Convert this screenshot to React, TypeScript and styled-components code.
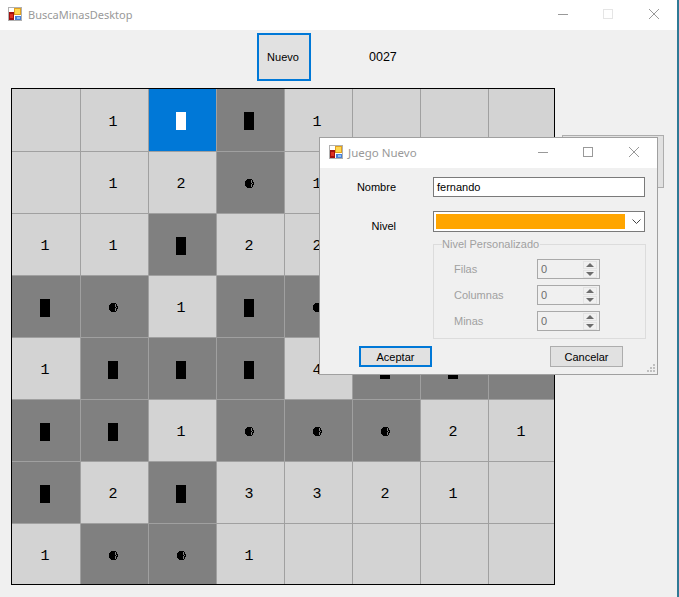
import styled, { createGlobalStyle } from "styled-components";

const BOARD = [
  ".1Ff1...",
  ".12b1...",
  "11f22...",
  "fb1fb...",
  "1fff4ffx",
  "ff1bbb21",
  "f2f3321.",
  "1bb1....",
];

const GlobalStyle = createGlobalStyle`
  html, body {
    margin: 0;
    padding: 0;
    background: #f0f0f0;
  }
  * {
    box-sizing: border-box;
  }
`;

const Desktop = styled.div`
  position: relative;
  display: flex;
  width: 679px;
  height: 597px;
  overflow: hidden;
  font-family: "Liberation Sans", Arial, sans-serif;
  font-size: 11px;
  color: #000;
`;

const MainWindow = styled.div`
  flex: 1;
  display: flex;
  flex-direction: column;
  background: #f0f0f0;
`;

const DesktopEdge = styled.div`
  width: 2px;
  background: #2f7a96;
`;

const TitleBar = styled.div`
  display: flex;
  align-items: center;
  flex-shrink: 0;
  height: 30px;
  background: #fff;
`;

const MainTitleBar = styled(TitleBar)`
  padding-left: 8px;
`;

const DialogTitleBar = styled(TitleBar)`
  padding-left: 9px;
`;

const AppIconFrame = styled.svg`
  display: block;
  flex-shrink: 0;
  margin-bottom: 2px;
`;

const TitleText = styled.span`
  margin-left: 6px;
  margin-bottom: 2px;
  font-family: "Noto Sans", sans-serif;
  font-size: 11px;
  color: #999;
  white-space: nowrap;
`;

const DialogTitleText = styled(TitleText)`
  margin-left: 5px;
  font-size: 11.5px;
`;

const WindowControls = styled.div`
  display: flex;
  align-items: center;
  gap: 35px;
  margin-left: auto;
  margin-bottom: 2px;
  padding-right: 18px;
`;

const ControlIcon = styled.svg`
  display: block;
  width: 10px;
  height: 10px;
`;

const CloseGlyph = styled(ControlIcon)`
  margin-left: 1px;
`;

const Toolbar = styled.div`
  display: flex;
  align-items: flex-start;
  height: 58px;
  padding: 3px 0 0 257px;
`;

const ActionButton = styled.button<{ $focused?: boolean }>`
  padding: 0;
  font-family: inherit;
  font-size: 11px;
  color: #000;
  background: #e1e1e1;
  border: ${(p) => (p.$focused ? "2px solid #0078d7" : "1px solid #adadad")};
  border-radius: 0;
`;

const NewGameButton = styled(ActionButton)`
  width: 54px;
  height: 48px;
  padding-right: 2px;
`;

const Counter = styled.span`
  margin-left: 58px;
  font-size: 12.5px;
  line-height: 48px;
`;

const Board = styled.div`
  display: grid;
  grid-template-columns: 68px repeat(6, 67px) 65px;
  grid-template-rows: 62px repeat(6, 61px) 60px;
  gap: 1px;
  width: 544px;
  height: 497px;
  margin-left: 11px;
  background: #a0a0a0;
  border: 1px solid #000;
`;

const CELL_COLORS = { open: "#d3d3d3", closed: "#808080", selected: "#0078d7" };

const Cell = styled.div<{ $tone: keyof typeof CELL_COLORS }>`
  display: flex;
  align-items: center;
  justify-content: center;
  padding: 2px 3px 0 0;
  font-family: "Liberation Mono", monospace;
  font-size: 15px;
  background: ${(p) => CELL_COLORS[p.$tone]};

  &:nth-child(8n + 1) {
    padding-right: 2px;
  }

  &:nth-child(8n) {
    padding-right: 1px;
  }
`;

const CellNumber = styled.span`
  padding-top: 2px;
`;

const FlagMark = styled.span<{ $light?: boolean }>`
  width: 10px;
  height: 18px;
  background: ${(p) => (p.$light ? "#fff" : "#000")};
`;

const BackgroundButton = styled.div`
  position: absolute;
  top: 135px;
  left: 562px;
  width: 102px;
  height: 53px;
  background: #e1e1e1;
  border: 1px solid #adadad;
`;

const Dialog = styled.div`
  position: absolute;
  top: 137px;
  left: 319px;
  display: flex;
  flex-direction: column;
  width: 339px;
  height: 238px;
  background: #f0f0f0;
  border: 1px solid #a0a0a0;
`;

const DialogBody = styled.div`
  display: flex;
  flex-direction: column;
  padding-top: 9px;
`;

const FormRow = styled.div<{ $gap?: number }>`
  display: flex;
  align-items: flex-start;
  height: ${(p) => (p.$gap ? 20 + p.$gap : 21)}px;
`;

const FormLabel = styled.label<{ $drop: number }>`
  width: 76px;
  margin-top: ${(p) => p.$drop}px;
  margin-right: 37px;
  text-align: right;
  white-space: nowrap;
`;

const NameInput = styled.div`
  display: flex;
  align-items: center;
  width: 212px;
  height: 20px;
  padding-left: 3px;
  background: #fff;
  border: 1px solid #7a7a7a;
`;

const LevelSelect = styled.div`
  display: flex;
  align-items: center;
  width: 212px;
  height: 21px;
  padding: 2px;
  background: #fff;
  border: 1px solid #7a7a7a;
`;

const LevelColor = styled.div`
  width: 189px;
  height: 15px;
  background: #ffa500;
`;

const ChevronIcon = styled.svg`
  display: block;
  width: 9px;
  height: 5px;
  margin-left: 7px;
`;

const CustomGroup = styled.fieldset`
  width: 213px;
  margin: 5px 0 0 113px;
  padding: 8px 0 7px 20px;
  border: 1px solid #dcdcdc;
`;

const GroupLegend = styled.legend`
  margin-left: -12px;
  padding: 0 1px 0 0;
  line-height: 14px;
  font-size: 11px;
  color: #a0a0a0;
`;

const SpinRow = styled.div`
  display: flex;
  align-items: center;
  height: 20px;
  margin-bottom: 6px;

  &:last-child {
    margin-bottom: 0;
  }
`;

const SpinLabel = styled.span`
  width: 83px;
  color: #a0a0a0;
`;

const SpinField = styled.div`
  display: flex;
  align-items: center;
  justify-content: space-between;
  width: 63px;
  height: 20px;
  padding: 1px 2px 1px 3px;
  color: #6d6d6d;
  border: 1px solid #a9a9a9;
`;

const SpinButtons = styled.div`
  display: flex;
  flex-direction: column;
  gap: 1px;
  width: 14px;
`;

const SpinButton = styled.div`
  display: flex;
  align-items: center;
  justify-content: center;
  height: 8px;
  background: #f0f0f0;
  border: 1px solid #e3e3e3;
`;

const SpinArrow = styled.span<{ $down?: boolean }>`
  width: 0;
  height: 0;
  border-left: 4px solid transparent;
  border-right: 4px solid transparent;
  ${(p) => (p.$down ? "border-top: 4px solid #6d6d6d;" : "border-bottom: 4px solid #6d6d6d;")}
`;

const DialogActions = styled.div`
  display: flex;
  justify-content: space-between;
  margin-top: 7px;
  padding: 0 34px 0 39px;
`;

const DialogButton = styled(ActionButton)`
  width: 73px;
  height: 21px;
`;

const ResizeGrip = styled.svg`
  position: absolute;
  right: 1px;
  bottom: 1px;
  width: 9px;
  height: 9px;
`;

function AppIcon() {
  return (
    <AppIconFrame width="14" height="14" viewBox="0 0 14 14" shapeRendering="crispEdges">
      <rect width="14" height="14" fill="#b0b0b0" />
      <rect x="1" y="1" width="12" height="12" fill="#fff" />
      <rect x="6" y="1" width="7" height="7" fill="#e0a020" />
      <rect x="7" y="2" width="5" height="5" fill="#ffd850" />
      <rect x="1" y="5" width="5" height="8" fill="#a01010" />
      <rect x="2" y="7" width="3" height="4" fill="#e03020" />
      <rect x="7" y="9" width="6" height="4" fill="#4a80d8" />
      <rect x="9" y="10" width="3" height="2" fill="#90c0f0" />
    </AppIconFrame>
  );
}

function MinimizeIcon({ color }: { color: string }) {
  return (
    <ControlIcon viewBox="0 0 10 10" shapeRendering="crispEdges">
      <rect x="0" y="5" width="10" height="1" fill={color} />
    </ControlIcon>
  );
}

function MaximizeIcon({ color }: { color: string }) {
  return (
    <ControlIcon viewBox="0 0 10 10" shapeRendering="crispEdges">
      <rect x="0.5" y="0.5" width="9" height="9" fill="none" stroke={color} />
    </ControlIcon>
  );
}

function CloseIcon() {
  return (
    <CloseGlyph viewBox="0 0 10 10">
      <path d="M0 0L10 10M10 0L0 10" stroke="#999" fill="none" />
    </CloseGlyph>
  );
}

function MineIcon() {
  return (
    <svg width="9" height="9" viewBox="0 0 9 9" shapeRendering="crispEdges">
      <path
        d="M2 0h5v1H2zM1 1h5v1H1zM7 1h1v1H7zM0 2h6v1H0zM7 2h1v1H7zM0 3h6v1H0zM7 3h2v1H7zM0 4h7v1H0zM8 4h1v1H8zM0 5h6v1H0zM7 5h2v1H7zM0 6h6v1H0zM7 6h1v1H7zM1 7h5v1H1zM7 7h1v1H7zM2 8h5v1H2z"
        fill="#000"
      />
    </svg>
  );
}

function BoardCell({ value }: { value: string }) {
  if (value === "F") {
    return (
      <Cell $tone="selected">
        <FlagMark $light />
      </Cell>
    );
  }
  if (value === "f") {
    return (
      <Cell $tone="closed">
        <FlagMark />
      </Cell>
    );
  }
  if (value === "b") {
    return (
      <Cell $tone="closed">
        <MineIcon />
      </Cell>
    );
  }
  if (value === "x") return <Cell $tone="closed" />;
  if (value === ".") return <Cell $tone="open" />;
  return (
    <Cell $tone="open">
      <CellNumber>{value}</CellNumber>
    </Cell>
  );
}

function Spinner({ label }: { label: string }) {
  return (
    <SpinRow>
      <SpinLabel>{label}</SpinLabel>
      <SpinField>
        0
        <SpinButtons>
          <SpinButton>
            <SpinArrow />
          </SpinButton>
          <SpinButton>
            <SpinArrow $down />
          </SpinButton>
        </SpinButtons>
      </SpinField>
    </SpinRow>
  );
}

function NewGameDialog() {
  return (
    <Dialog>
      <DialogTitleBar>
        <AppIcon />
        <DialogTitleText>Juego Nuevo</DialogTitleText>
        <WindowControls>
          <MinimizeIcon color="#999" />
          <MaximizeIcon color="#999" />
          <CloseIcon />
        </WindowControls>
      </DialogTitleBar>
      <DialogBody>
        <FormRow $gap={14}>
          <FormLabel $drop={4}>Nombre</FormLabel>
          <NameInput>fernando</NameInput>
        </FormRow>
        <FormRow>
          <FormLabel $drop={9}>Nivel</FormLabel>
          <LevelSelect>
            <LevelColor />
            <ChevronIcon viewBox="0 0 9 5">
              <path d="M0.5 0.5L4.5 4.5L8.5 0.5" fill="none" stroke="#444" />
            </ChevronIcon>
          </LevelSelect>
        </FormRow>
        <CustomGroup>
          <GroupLegend>Nivel Personalizado</GroupLegend>
          <Spinner label="Filas" />
          <Spinner label="Columnas" />
          <Spinner label="Minas" />
        </CustomGroup>
        <DialogActions>
          <DialogButton $focused>Aceptar</DialogButton>
          <DialogButton>Cancelar</DialogButton>
        </DialogActions>
      </DialogBody>
      <ResizeGrip viewBox="0 0 9 9" shapeRendering="crispEdges">
        <path d="M6 0h2v2H6zM3 3h2v2H3zM6 3h2v2H6zM0 6h2v2H0zM3 6h2v2H3zM6 6h2v2H6z" fill="#c0c0c0" />
      </ResizeGrip>
    </Dialog>
  );
}

export default function App() {
  return (
    <Desktop>
      <GlobalStyle />
      <MainWindow>
        <MainTitleBar>
          <AppIcon />
          <TitleText>BuscaMinasDesktop</TitleText>
          <WindowControls>
            <MinimizeIcon color="#999" />
            <MaximizeIcon color="#e5e5e5" />
            <CloseIcon />
          </WindowControls>
        </MainTitleBar>
        <Toolbar>
          <NewGameButton $focused>Nuevo</NewGameButton>
          <Counter>0027</Counter>
        </Toolbar>
        <Board>
          {BOARD.flatMap((row, r) =>
            row.split("").map((value, c) => <BoardCell key={`${r}-${c}`} value={value} />)
          )}
        </Board>
      </MainWindow>
      <DesktopEdge />
      <BackgroundButton />
      <NewGameDialog />
    </Desktop>
  );
}
